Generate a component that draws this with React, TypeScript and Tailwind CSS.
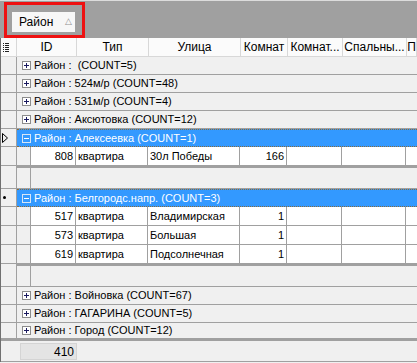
import React from "react";

const cols = [
  { label: "ID", w: "w-[60px]" },
  { label: "Тип", w: "w-[72px]" },
  { label: "Улица", w: "w-[92px]" },
  { label: "Комнат", w: "w-[47px]" },
  { label: "Комнат...", w: "w-[55px]" },
  { label: "Спальны...", w: "w-[64px]" },
  { label: "П", w: "flex-1" },
];

type Rec = { id: number; type: string; street: string; rooms: number };

function ExpandBox({ open, selected }: { open: boolean; selected?: boolean }) {
  return (
    <span
      className={`relative flex h-[9px] w-[9px] shrink-0 items-center justify-center border ${
        selected ? "border-[#d8e6f5] bg-[#3399ff]" : "border-[#8c8c8c] bg-white"
      }`}
    >
      <span className={`absolute h-px w-[5px] ${selected ? "bg-white" : "bg-[#1a1a60]"}`} />
      {!open && <span className="absolute h-[5px] w-px bg-[#1a1a60]" />}
    </span>
  );
}

function Indicator({ kind, h }: { kind?: "arrow" | "dot"; h: string }) {
  return (
    <div className={`flex ${h} w-[16px] shrink-0 items-center border-b border-r border-[#a0a0a0] bg-[#f0f0f0] pl-[1px]`}>
      {kind === "arrow" && (
        <svg width="6" height="10" viewBox="0 0 6 10">
          <path d="M0.5 0.5 L5.5 5 L0.5 9.5 Z" fill="none" stroke="#000" strokeWidth="1" />
        </svg>
      )}
      {kind === "dot" && <span className="ml-[1px] h-[3px] w-[3px] rounded-full bg-black" />}
    </div>
  );
}

function GroupRow({
  text,
  open = false,
  selected = false,
  kind,
  h = "h-[18px]",
}: {
  text: string;
  open?: boolean;
  selected?: boolean;
  kind?: "arrow" | "dot";
  h?: string;
}) {
  return (
    <div className="flex">
      <Indicator kind={kind} h={h} />
      <div
        className={`flex ${h} flex-1 items-center gap-[3px] border-b pl-[5px] ${
          selected
            ? "border-[#8a6a3a] border-t border-dotted bg-[#3399ff] text-white"
            : "border-[#a0a0a0] bg-[#f0f0f0] text-black"
        }`}
      >
        <ExpandBox open={open} selected={selected} />
        <span className="whitespace-pre">{text}</span>
      </div>
    </div>
  );
}

function DataRow({ r }: { r: Rec }) {
  const cell = "flex h-full items-center border-r border-[#a0a0a0] bg-white px-[2px]";
  return (
    <div className="flex h-[19px]">
      <Indicator h="h-[19px]" />
      <div className="flex flex-1 border-b border-[#a0a0a0]">
        <div className="h-full w-[14px] shrink-0 border-r border-[#a0a0a0] bg-[#f0f0f0]" />
        <div className={`${cell} w-[45px] justify-end`}>{r.id}</div>
        <div className={`${cell} w-[72px]`}>{r.type}</div>
        <div className={`${cell} w-[92px]`}>{r.street}</div>
        <div className={`${cell} w-[47px] justify-end`}>{r.rooms}</div>
        <div className={`${cell} w-[55px]`} />
        <div className={`${cell} w-[64px]`} />
        <div className="h-full flex-1 bg-white" />
      </div>
    </div>
  );
}

function GroupFooter({ h }: { h: string }) {
  return (
    <div className="flex">
      <Indicator h={h} />
      <div className={`flex ${h} flex-1 border-b border-t-2 border-[#a0a0a0] bg-[#f0f0f0]`}>
        <div className="h-full w-[14px] border-r border-[#a0a0a0]" />
      </div>
    </div>
  );
}

export default function App() {
  const first: Rec[] = [{ id: 808, type: "квартира", street: "30л Победы", rooms: 166 }];
  const second: Rec[] = [
    { id: 517, type: "квартира", street: "Владимирская", rooms: 1 },
    { id: 573, type: "квартира", street: "Большая", rooms: 1 },
    { id: 619, type: "квартира", street: "Подсолнечная", rooms: 1 },
  ];

  return (
    <div className="h-[363px] w-[417px] overflow-hidden bg-[#f0f0f0] font-['Liberation_Sans',Arial,sans-serif] text-[11px] text-black">
      {/* group panel */}
      <div className="h-[38px] border-t border-[#dcdcdc] bg-[#a0a0a0] pl-[4px] pt-[1px]">
        <div className="h-[36px] w-[81px] border-[3px] border-[#ee1111] pl-[5px] pt-[7px]">
          <div className="flex h-[20px] w-[63px] items-center bg-[#f7f7f7] pl-[7px] text-[12px]">
            <span>Район</span>
            <span className="ml-[12px] text-[9px] text-[#909090]">△</span>
          </div>
        </div>
      </div>

      <div className="border-l border-[#707070]">
        {/* header */}
        <div className="flex h-[19px] border-b border-[#d8d8d8] bg-[#fbfbfb]">
          <div className="flex h-full w-[16px] shrink-0 items-center border-r border-[#d8d8d8] pl-[2px]">
            <svg width="6" height="9" viewBox="0 0 6 9">
              {[0, 2, 4, 6, 8].map((y) => (
                <g key={y}>
                  <rect x="0" y={y} width="1" height="1" fill="#222" />
                  <rect x="2" y={y} width="4" height="1" fill="#222" />
                </g>
              ))}
            </svg>
          </div>
          {cols.map((c) => (
            <div
              key={c.label}
              className={`${c.w} flex h-full shrink-0 items-center justify-center overflow-hidden whitespace-nowrap border-r border-[#d8d8d8] text-[12px]`}
            >
              {c.label}
            </div>
          ))}
        </div>

        <GroupRow text="Район :  (COUNT=5)" />
        <GroupRow text="Район : 524м/р (COUNT=48)" />
        <GroupRow text="Район : 531м/р (COUNT=4)" />
        <GroupRow text="Район : Аксютовка (COUNT=12)" />
        <GroupRow text="Район : Алексеевка (COUNT=1)" open selected kind="arrow" />
        {first.map((r) => (
          <DataRow key={r.id} r={r} />
        ))}
        <GroupFooter h="h-[23px]" />
        <GroupRow text="Район : Белгородс.напр. (COUNT=3)" open selected kind="dot" />
        {second.map((r) => (
          <DataRow key={r.id} r={r} />
        ))}
        <GroupFooter h="h-[23px]" />
        <GroupRow text="Район : Войновка (COUNT=67)" />
        <GroupRow text="Район : ГАГАРИНА (COUNT=5)" />
        <GroupRow text="Район : Город (COUNT=12)" h="h-[16px]" />

        {/* summary footer */}
        <div className="flex h-[23px] border-b border-t-2 border-[#a0a0a0] bg-[#f0f0f0]">
          <div className="w-[19px] shrink-0" />
          <div className="mt-[2px] flex h-[17px] w-[57px] items-center justify-end border border-[#d4d4d4] bg-[#e4e4e4] pr-[2px] text-[12px]">
            410
          </div>
        </div>
      </div>
    </div>
  );
}
